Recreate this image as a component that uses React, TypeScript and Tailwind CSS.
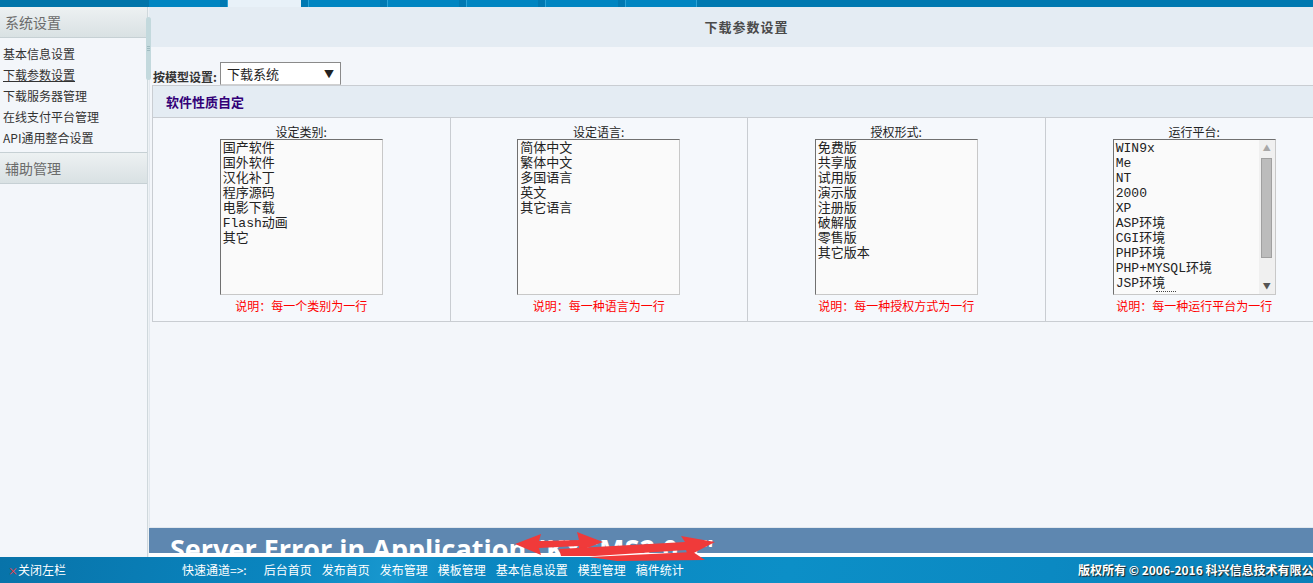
import React from "react";

const TABS = [
  { w: "w-[71px]", active: false },
  { w: "w-[73px]", active: true },
  { w: "w-[71px]", active: false },
  { w: "w-[71px]", active: false },
  { w: "w-[71px]", active: false },
  { w: "w-[72px]", active: false },
  { w: "w-[70px]", active: false },
];

const SIDE_LINKS = ["基本信息设置", "下载参数设置", "下载服务器管理", "在线支付平台管理", "API通用整合设置"];

const QUICK = ["后台首页", "发布首页", "发布管理", "模板管理", "基本信息设置", "模型管理", "稿件统计"];

const COLUMNS = [
  {
    label: "设定类别:",
    items: ["国产软件", "国外软件", "汉化补丁", "程序源码", "电影下载", "Flash动画", "其它"],
    note: "说明：每一个类别为一行",
  },
  {
    label: "设定语言:",
    items: ["简体中文", "繁体中文", "多国语言", "英文", "其它语言"],
    note: "说明：每一种语言为一行",
  },
  {
    label: "授权形式:",
    items: ["免费版", "共享版", "试用版", "演示版", "注册版", "破解版", "零售版", "其它版本"],
    note: "说明：每一种授权方式为一行",
  },
  {
    label: "运行平台:",
    items: ["WIN9x", "Me", "NT", "2000", "XP", "ASP环境", "CGI环境", "PHP环境", "PHP+MYSQL环境", "JSP环境"],
    note: "说明：每一种运行平台为一行",
    scroll: true,
  },
];

function TopBar() {
  return (
    <div className="flex h-[7px] shrink-0 bg-[#0077ad]">
      <div className="w-[149px] bg-[#0074a9]" />
      {TABS.map((t, i) => (
        <React.Fragment key={i}>
          {i > 0 && <div className="w-[8px] border-r border-[#2aa2d6] bg-[#0079b2]" />}
          <div className={`${t.w} ${t.active ? "bg-[#e8f1f8]" : "bg-[#0085c1]"}`} />
        </React.Fragment>
      ))}
      <div className="flex-1 border-l border-[#2aa2d6] bg-[#0079b0]" />
    </div>
  );
}

function Sidebar() {
  return (
    <aside className="relative flex w-[148px] shrink-0 flex-col border-r border-[#cfd8dc] bg-[#f3f6fa]">
      <div className="flex h-[31px] items-center border-b border-[#c6d0d4] bg-[linear-gradient(#edf1f2,#d9e1e3)] pl-[5px] text-[14px] text-[#6b6b6b]">
        系统设置
      </div>
      <ul className="flex flex-col pt-[5px] pb-[4px] text-[12px] leading-[21px] text-[#333]">
        {SIDE_LINKS.map((s, i) => (
          <li key={s} className={`pl-[3px] ${i === 1 ? "underline" : ""}`}>
            {s}
          </li>
        ))}
      </ul>
      <div className="flex h-[32px] items-center border-y border-[#c6d0d4] bg-[linear-gradient(#edf1f2,#d9e1e3)] pl-[5px] text-[14px] text-[#6b6b6b]">
        辅助管理
      </div>
      {/* scrollbar thumb */}
      <div className="absolute right-[-4px] top-[10px] flex h-[63px] w-[5px] flex-col items-center justify-center gap-[1px] rounded-full bg-[#c3d9dd]">
        <span className="h-px w-[3px] bg-[#9fbcc1]" />
        <span className="h-px w-[3px] bg-[#9fbcc1]" />
        <span className="h-px w-[3px] bg-[#9fbcc1]" />
      </div>
    </aside>
  );
}

function ListBox({ items, scroll }: { items: string[]; scroll?: boolean }) {
  return (
    <div className="mx-auto flex h-[156px] w-[163px] overflow-hidden border border-t-[#707070] border-l-[#707070] border-r-[#c8c8c8] border-b-[#c8c8c8] bg-[#fafafa]">
      <div className="flex-1 pl-[2px] pt-[1px] font-['Liberation_Mono','Noto_Sans_CJK_SC',monospace] text-[13px] leading-[15px] text-[#222]">
        {items.map((it) => (
          <div key={it} className="whitespace-nowrap">
            {it}
          </div>
        ))}
        {scroll && <div className="ml-[40px] h-[2px] w-[20px] border-t border-dotted border-[#444]" />}
      </div>
      {scroll && (
        <div className="flex w-[16px] flex-col items-center bg-[#f0f0f0]">
          <span className="pt-[3px] text-[8px] leading-[10px] text-[#a8a8a8]">▲</span>
          <div className="mt-[5px] h-[100px] w-[11px] border border-[#a0a0a0] bg-[#bcbcbc]" />
          <span className="mt-auto pb-[3px] text-[8px] leading-[10px] text-[#555]">▼</span>
        </div>
      )}
    </div>
  );
}

function ErrorArrows() {
  return (
    <svg
      className="absolute left-[364px] top-[4px] z-10"
      width="240"
      height="30"
      viewBox="0 0 240 30"
      aria-hidden
    >
      {/* double headed arrow */}
      <polygon fill="#f03a3a" points="2,12 28,2 26,9 66,8 64,0 90,10 66,19 66,14 26,16 28,23" />
      {/* long arrow to the right */}
      <polygon fill="#f03a3a" points="46,17 172,10 168,4 202,10 175,24 173,18 82,24 48,24" />
      <polygon fill="#f03a3a" points="76,25 180,20 192,28 104,29" />
    </svg>
  );
}

export default function App() {
  return (
    <div className="flex h-[583px] w-[1313px] flex-col overflow-hidden bg-[#f3f6fa] font-['Noto_Sans_CJK_SC','Liberation_Sans',sans-serif]">
      <TopBar />

      <div className="flex min-h-0 flex-1">
        <Sidebar />
        <div className="w-[1px] shrink-0 bg-[#eef2f5]" />

        <main className="flex w-[1195px] shrink-0 flex-col">
          <div className="flex h-[40px] shrink-0 items-center justify-center bg-[#e4ecf3] text-[13px] font-bold tracking-[1px] text-[#4a4a4a]">
            下载参数设置
          </div>

          <div className="flex min-h-0 flex-1 flex-col border-b border-l border-[#e2e8ee] pl-[2px] pt-[15px]">
            <div className="flex items-end text-[12px] text-[#333]">
              <span className="pr-[3px] pl-[1px] font-semibold leading-[16px]">按模型设置:</span>
              <div className="flex h-[23px] w-[121px] items-center justify-between border border-[#8a8a8a] border-b-[#d0d0d0] bg-white pl-[6px] pr-[6px] text-[13px] text-[#222]">
                <span>下载系统</span>
                <span className="text-[10px]">▼</span>
              </div>
            </div>

            <div className="w-[1192px] border border-[#c9cdd2]">
              <div className="flex h-[32px] items-center border-b border-[#c9cdd2] bg-[#e4ecf3] pl-[13px] text-[13px] font-bold text-[#330077]">
                软件性质自定
              </div>
              <div className="grid grid-cols-4 bg-[#f5f8fc]">
                {COLUMNS.map((c, i) => (
                  <div
                    key={c.label}
                    className={`flex flex-col items-center pt-[6px] pb-[7px] ${i < 3 ? "border-r border-[#c9cdd2]" : ""}`}
                  >
                    <div className="h-[15px] text-[12px] leading-[15px] text-[#222]">{c.label}</div>
                    <ListBox items={c.items} scroll={c.scroll} />
                    <div className="mt-[3px] text-[12px] leading-[16px] text-[#ff0000]">{c.note}</div>
                  </div>
                ))}
              </div>
            </div>
          </div>

          <div className="relative shrink-0">
            <div className="h-[25px] overflow-hidden bg-[#5e87b0] pl-[21px]">
              <div className="whitespace-nowrap pt-[5px] font-['Open_Sans','Liberation_Sans',sans-serif] text-[27px] font-bold leading-[32px] text-white">
                Server Error in Application "KXCMS2.0.1"
              </div>
            </div>
            <div className="h-[4px] bg-white" />
            <ErrorArrows />
          </div>
        </main>
      </div>

      <footer className="flex h-[26px] shrink-0 items-center bg-[linear-gradient(100deg,#0873a9_0%,#0a86c0_22%,#1898cf_30%,#0a86c0_36%,#0c8fc7_60%,#0b89c2_80%,#0a7fb8_100%)] text-[12px] text-white">
        <div className="flex w-[1078px] shrink-0 items-center">
          <div className="flex w-[182px] items-center pl-[8px]">
            <span className="text-[10px] text-[#ff3b3b]">×</span>
            <span>关闭左栏</span>
          </div>
          <span className="mr-[17px]">快速通道=&gt;:</span>
          <nav className="flex gap-[10px]">
            {QUICK.map((q) => (
              <span key={q}>{q}</span>
            ))}
          </nav>
        </div>
        <span className="whitespace-nowrap text-[12px] font-bold [text-shadow:1px_1px_1px_#222]">
          版权所有 © 2006-2016 科兴信息技术有限公司
        </span>
      </footer>
    </div>
  );
}
